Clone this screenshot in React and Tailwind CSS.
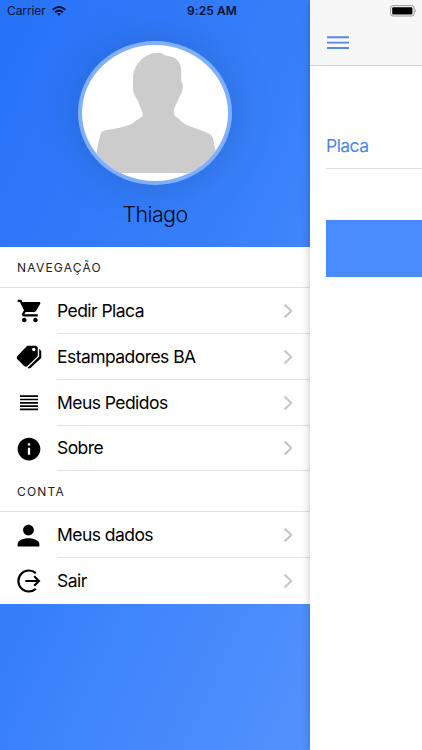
import { IoMdCart, IoMdPricetags, IoMdInformationCircle, IoMdPerson } from 'react-icons/io';

function LinesIcon() {
  return (
    <svg viewBox="0 0 24 24" className="size-6" stroke="#000" strokeWidth="1.7">
      <path d="M3 5.2h18M3 8.5h18M3 11.8h18M3 15.1h18M3 18.4h18" />
    </svg>
  );
}

function ExitIcon() {
  return (
    <svg viewBox="0 0 24 24" className="size-6" fill="none" stroke="#000" strokeWidth="2.2">
      <path d="M18.8 4.1A10.5 10.5 0 1 0 18.8 19.9" />
      <path d="M8.3 12h13.5M17.2 7.3 21.9 12l-4.7 4.7" />
    </svg>
  );
}

function Row({ icon, label, last, height = 'h-[46px]' }) {
  return (
    <div className={`flex items-center pl-[16px] ${height}`}>
      <div className="flex w-[25px] shrink-0 items-center justify-center">{icon}</div>
      <div className={`ml-[16px] flex h-full min-w-0 flex-1 items-center justify-between pr-[16px] ${last ? '' : 'border-b border-[#e2e2e2]'}`}>
        <span className="whitespace-nowrap text-[17.5px] leading-6 tracking-[-0.55px] text-black">{label}</span>
        <svg viewBox="0 0 12 16" className="h-4 w-3" fill="none" stroke="#c4c4c8" strokeWidth="2">
          <path d="M2.5 1.5 9.3 8l-6.8 6.5" />
        </svg>
      </div>
    </div>
  );
}

function SectionTitle({ children }) {
  return (
    <div className="flex h-[41px] items-center border-b border-[#e2e2e2] pt-px pl-[17px] text-[12px] tracking-[1.2px] text-[#222]">
      {children}
    </div>
  );
}

function Avatar() {
  return (
    <div className="mt-[41px] h-[144px] w-[154px] rounded-[50%] shadow-[0_0_45px_rgba(0,0,0,0.15)]">
      <svg viewBox="53 33 464 432" className="h-full w-full" preserveAspectRatio="none">
        <defs>
          <clipPath id="face">
            <ellipse cx="285" cy="249" rx="220" ry="204" />
          </clipPath>
        </defs>
        <ellipse cx="285" cy="249" rx="232" ry="216" fill="#80affb" />
        <ellipse cx="285" cy="249" rx="220" ry="204" fill="#fff" />
        <path
          clipPath="url(#face)"
          fill="#ccc"
          d="M219 150C218 103 252 68 298 68C309 69 313 77 324 78C350 81 363 96 364 120V153C372 165 369 177 364 191C354 205 353 217 345 230C340 239 342 249 344 258C358 265 367 279 382 286C407 297 441 304 456 317C462 325 462 343 467 356L475 429H100L111 353L121 312C126 298 149 301 184 292C200 288 213 284 222 277C229 270 239 265 248 259C250 244 240 235 237 221C233 208 222 196 219 182Z"
        />
      </svg>
    </div>
  );
}

export default function App() {
  return (
    <div className="relative flex h-[750px] w-[422px] overflow-hidden bg-white font-['Inter','Liberation_Sans',sans-serif]">
      <aside className="flex w-[310px] shrink-0 flex-col bg-[linear-gradient(115deg,#2672f8_0%,#3880fa_50%,#5292fd_100%)]">
        <header className="flex h-[247px] shrink-0 flex-col items-center overflow-hidden">
          <Avatar />
          <div className="mt-[13px] text-[21.5px] leading-8 font-light tracking-[-0.65px] text-[#000820]">Thiago</div>
        </header>
        <nav className="h-[357px] shrink-0 bg-white">
          <SectionTitle>NAVEGAÇÃO</SectionTitle>
          <Row icon={<IoMdCart className="size-[28px] shrink-0" />} label="Pedir Placa" />
          <Row icon={<IoMdPricetags className="size-[28px] shrink-0" />} label="Estampadores BA" />
          <Row icon={<LinesIcon />} label="Meus Pedidos" />
          <Row icon={<IoMdInformationCircle className="size-[28px] shrink-0" />} label="Sobre" height="h-[45px]" />
          <SectionTitle>CONTA</SectionTitle>
          <Row icon={<IoMdPerson className="size-[29px] shrink-0" />} label="Meus dados" />
          <Row icon={<ExitIcon />} label="Sair" last />
        </nav>
      </aside>
      <main className="min-w-0 flex-1 bg-white shadow-[0_0_8px_rgba(0,0,0,0.24)]">
        <div className="flex h-[66px] items-end border-b border-[#d2d2d2] bg-[#f7f7f7] pb-[15px] pl-[17px]">
          <svg viewBox="0 0 22 14" className="h-[14px] w-[22px]" stroke="#5788e2" strokeWidth="1.9">
            <path d="M0 1.2h22M0 6.6h22M0 12h22" />
          </svg>
        </div>
        <div className="ml-[16px] flex h-[103px] items-end border-b border-[#e0e0e0] pb-[10px] text-[17.5px] leading-6 tracking-[-0.55px] text-[#4a86ee]">
          Placa
        </div>
        <div className="mt-[51px] ml-[16px] h-[57px] bg-[#488aff]" />
      </main>
      <div className="absolute inset-x-0 top-0 flex h-[22px] items-center justify-between pr-[5px] pl-[7px] text-[#051030]">
        <div className="flex w-[99px] items-center">
          <span className="text-[12px] tracking-[-0.1px]">Carrier</span>
          <svg viewBox="0 0 14 10" className="ml-[6px] h-[10px] w-[14px]" fill="none" stroke="currentColor" strokeWidth="2">
            <path d="M.7 3.8Q7-1.7 13.3 3.8M3 6.3Q7 3 11 6.3" />
            <path d="M7 9.8 4.9 7.7Q7 6.1 9.1 7.7Z" fill="currentColor" stroke="none" />
          </svg>
        </div>
        <span className="text-[12px] font-semibold tracking-[0.1px]">9:25 AM</span>
        <div className="flex w-[99px] justify-end">
          <svg viewBox="0 0 27 12" className="h-[12px] w-[27px]">
            <rect x=".6" y=".6" width="23.5" height="10.4" rx="2.4" fill="#f7f7f7" stroke="#999" />
            <rect x="2.2" y="2.2" width="20.2" height="7.2" rx="1" fill="#000" />
            <path d="M25 4Q26.6 5.8 25 7.6Z" fill="#888" />
          </svg>
        </div>
      </div>
    </div>
  );
}
